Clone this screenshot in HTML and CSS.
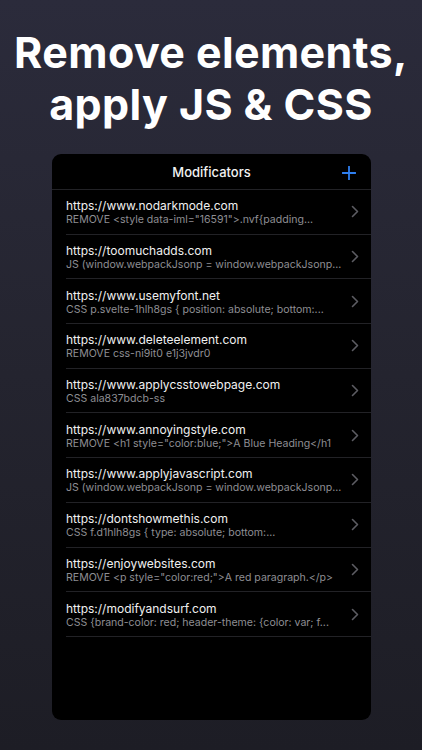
FILE: index.html
```html
<!DOCTYPE html>
<html>
<head>
<meta charset="utf-8">
<link rel="stylesheet" href="styles.css">
</head>
<body>
<div class="page">
  <h1 class="headline">Remove elements,<br>apply JS &amp; CSS</h1>
  <div class="card">
    <div class="card-header">
      <span class="card-title">Modificators</span>
      <svg class="plus" width="14" height="14" viewBox="0 0 14 14"><path d="M7 0.5V13.5M0.5 7H13.5" stroke="#2f7ff0" stroke-width="1.8" stroke-linecap="round"/></svg>
    </div>
    <ul class="list">
      <li class="row"><div class="row-text"><div class="url">https://www.nodarkmode.com</div><div class="rule">REMOVE &lt;style data-iml="16591"&gt;.nvf{padding...</div></div><svg class="chev" width="8" height="13" viewBox="0 0 8 13"><path d="M1.5 1.5L6.5 6.5L1.5 11.5" fill="none" stroke="#5c5c62" stroke-width="1.6" stroke-linecap="round" stroke-linejoin="round"/></svg></li>
      <li class="row"><div class="row-text"><div class="url">https://toomuchadds.com</div><div class="rule">JS (window.webpackJsonp = window.webpackJsonp...</div></div><svg class="chev" width="8" height="13" viewBox="0 0 8 13"><path d="M1.5 1.5L6.5 6.5L1.5 11.5" fill="none" stroke="#5c5c62" stroke-width="1.6" stroke-linecap="round" stroke-linejoin="round"/></svg></li>
      <li class="row"><div class="row-text"><div class="url">https://www.usemyfont.net</div><div class="rule">CSS p.svelte-1hlh8gs { position: absolute; bottom:...</div></div><svg class="chev" width="8" height="13" viewBox="0 0 8 13"><path d="M1.5 1.5L6.5 6.5L1.5 11.5" fill="none" stroke="#5c5c62" stroke-width="1.6" stroke-linecap="round" stroke-linejoin="round"/></svg></li>
      <li class="row"><div class="row-text"><div class="url">https://www.deleteelement.com</div><div class="rule">REMOVE css-ni9it0 e1j3jvdr0</div></div><svg class="chev" width="8" height="13" viewBox="0 0 8 13"><path d="M1.5 1.5L6.5 6.5L1.5 11.5" fill="none" stroke="#5c5c62" stroke-width="1.6" stroke-linecap="round" stroke-linejoin="round"/></svg></li>
      <li class="row"><div class="row-text"><div class="url">https://www.applycsstowebpage.com</div><div class="rule">CSS ala837bdcb-ss</div></div><svg class="chev" width="8" height="13" viewBox="0 0 8 13"><path d="M1.5 1.5L6.5 6.5L1.5 11.5" fill="none" stroke="#5c5c62" stroke-width="1.6" stroke-linecap="round" stroke-linejoin="round"/></svg></li>
      <li class="row"><div class="row-text"><div class="url">https://www.annoyingstyle.com</div><div class="rule">REMOVE &lt;h1 style="color:blue;"&gt;A Blue Heading&lt;/h1</div></div><svg class="chev" width="8" height="13" viewBox="0 0 8 13"><path d="M1.5 1.5L6.5 6.5L1.5 11.5" fill="none" stroke="#5c5c62" stroke-width="1.6" stroke-linecap="round" stroke-linejoin="round"/></svg></li>
      <li class="row"><div class="row-text"><div class="url">https://www.applyjavascript.com</div><div class="rule">JS (window.webpackJsonp = window.webpackJsonp...</div></div><svg class="chev" width="8" height="13" viewBox="0 0 8 13"><path d="M1.5 1.5L6.5 6.5L1.5 11.5" fill="none" stroke="#5c5c62" stroke-width="1.6" stroke-linecap="round" stroke-linejoin="round"/></svg></li>
      <li class="row"><div class="row-text"><div class="url">https://dontshowmethis.com</div><div class="rule">CSS f.d1hlh8gs { type: absolute; bottom:...</div></div><svg class="chev" width="8" height="13" viewBox="0 0 8 13"><path d="M1.5 1.5L6.5 6.5L1.5 11.5" fill="none" stroke="#5c5c62" stroke-width="1.6" stroke-linecap="round" stroke-linejoin="round"/></svg></li>
      <li class="row"><div class="row-text"><div class="url">https://enjoywebsites.com</div><div class="rule">REMOVE &lt;p style="color:red;"&gt;A red paragraph.&lt;/p&gt;</div></div><svg class="chev" width="8" height="13" viewBox="0 0 8 13"><path d="M1.5 1.5L6.5 6.5L1.5 11.5" fill="none" stroke="#5c5c62" stroke-width="1.6" stroke-linecap="round" stroke-linejoin="round"/></svg></li>
      <li class="row"><div class="row-text"><div class="url">https://modifyandsurf.com</div><div class="rule">CSS {brand-color: red; header-theme: {color: var; f...</div></div><svg class="chev" width="8" height="13" viewBox="0 0 8 13"><path d="M1.5 1.5L6.5 6.5L1.5 11.5" fill="none" stroke="#5c5c62" stroke-width="1.6" stroke-linecap="round" stroke-linejoin="round"/></svg></li>
    </ul>
  </div>
</div>
</body>
</html>
```
FILE: styles.css
```css
* { box-sizing: border-box; }
html, body { margin: 0; padding: 0; }
body {
  width: 422px;
  height: 750px;
  overflow: hidden;
  background: linear-gradient(180deg, #2b2b3b 0%, #24242f 50%, #1d1d25 100%);
  font-family: "Inter", "Liberation Sans", sans-serif;
  color: #fff;
}
.page {
  display: flex;
  flex-direction: column;
  align-items: center;
  padding-top: 26px;
}
.headline {
  margin: 0;
  font-size: 43px;
  line-height: 52px;
  font-weight: 700;
  text-align: center;
  letter-spacing: 0.4px;
}
.card {
  margin-top: 24px;
  width: 319px;
  height: 566px;
  background: #000;
  border-radius: 9px;
  overflow: hidden;
  margin-left: 1px;
}
.card-header {
  position: relative;
  height: 36px;
  display: flex;
  align-items: center;
  justify-content: center;
  border-bottom: 1px solid #222226;
}
.card-title {
  font-size: 13px;
  font-weight: 500;
  color: #f2f2f2;
}
.plus {
  position: absolute;
  right: 15px;
  top: 12px;
}
.list {
  list-style: none;
  margin: 0;
  padding: 0 0 0 14px;
}
.row {
  height: 44.7px;
  display: flex;
  align-items: center;
  border-bottom: 1px solid #222226;
  padding-right: 12px;
}
.row-text {
  flex: 1;
  min-width: 0;
  padding-top: 2px;
}
.url {
  font-size: 12px;
  line-height: 15px;
  color: #f0f0f0;
  white-space: nowrap;
}
.rule {
  font-size: 10.55px;
  line-height: 14px;
  color: #8e8e93;
  white-space: nowrap;
}
.chev { flex: none; margin-left: 2px; }
```
